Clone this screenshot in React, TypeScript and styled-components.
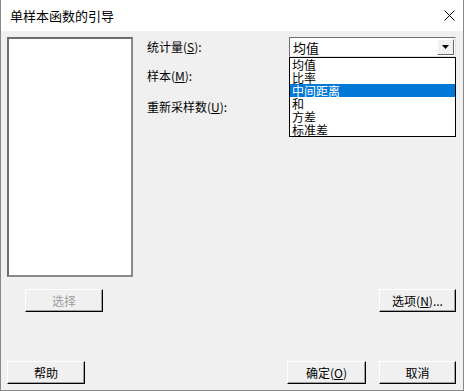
import React from "react";
import styled, { createGlobalStyle } from "styled-components";

const Global = createGlobalStyle`
  html, body { margin: 0; padding: 0; background: #f0f0f0; }
  body { font-family: "Noto Sans CJK SC", "Liberation Sans", sans-serif; }
  * { box-sizing: border-box; }
`;

const Window = styled.div`
  width: 464px;
  height: 391px;
  background: #f0f0f0;
  border-left: 1px solid #888;
  border-right: 1px solid #888;
  border-bottom: 1px solid #888;
  display: flex;
  flex-direction: column;
  font-family: "Noto Sans CJK SC", sans-serif;
  font-size: 12px;
  color: #000;
`;

const TitleBar = styled.div`
  height: 31px;
  background: #fff;
  display: flex;
  align-items: center;
  justify-content: space-between;
  padding: 0 8px 0 9px;
  font-size: 13px;
`;

const Close = styled.div`
  width: 12px;
  height: 12px;
  display: flex;
  align-items: center;
  justify-content: center;
`;

const Body = styled.div`
  flex: 1;
  display: flex;
  flex-direction: column;
  padding: 6px 7px 6px 6px;
`;

const Top = styled.div`
  display: flex;
  height: 240px;
`;

const ListBox = styled.div`
  width: 126px;
  height: 240px;
  background: #fff;
  border-top: 2px solid #6d6d6d;
  border-left: 2px solid #6d6d6d;
  border-right: 2px solid #8a8a8a;
  border-bottom: 2px solid #8a8a8a;
`;

const Form = styled.div`
  flex: 1;
  display: grid;
  grid-template-columns: 142px 167px;
  grid-template-rows: 20px 38px 24px;
  padding-left: 14px;
  align-items: center;
`;

const Label = styled.div<{ $row: number }>`
  font-size: 12px;
  line-height: 14px;
  grid-column: 1;
  grid-row: ${(p) => p.$row};
`;

const U = styled.span`
  text-decoration: underline;
`;

const ComboWrap = styled.div`
  position: relative;
  grid-column: 2;
  grid-row: 1;
  height: 20px;
`;

const Combo = styled.div`
  height: 20px;
  background: #fff;
  border-top: 1px solid #6d6d6d;
  border-left: 1px solid #6d6d6d;
  border-right: 1px solid #e3e3e3;
  border-bottom: 1px solid #e3e3e3;
  display: flex;
  align-items: center;
  padding-left: 3px;
  justify-content: space-between;
  font-size: 13px;
`;

const Arrow = styled.div`
  width: 17px;
  height: 16px;
  margin-right: 1px;
  background: #f0f0f0;
  border-top: 1px solid #fff;
  border-left: 1px solid #fff;
  border-right: 1px solid #696969;
  border-bottom: 1px solid #696969;
  display: flex;
  align-items: center;
  justify-content: center;
`;

const DropList = styled.div`
  position: absolute;
  top: 20px;
  left: 0;
  width: 167px;
  background: #fff;
  border: 1px solid #000;
  z-index: 2;
`;

const Item = styled.div<{ $sel?: boolean }>`
  height: 13px;
  line-height: 13px;
  font-size: 12px;
  padding-left: 2px;
  background: ${(p) => (p.$sel ? "#0078d7" : "#fff")};
  color: ${(p) => (p.$sel ? "#fff" : "#000")};
  white-space: nowrap;
`;

const Row = styled.div<{ $mt: number; $left: number }>`
  display: flex;
  align-items: center;
  justify-content: space-between;
  margin-top: ${(p) => p.$mt}px;
  padding-left: ${(p) => p.$left}px;
`;

const Group = styled.div`
  display: flex;
  gap: 13px;
`;

const Button = styled.div<{ $w: number; $disabled?: boolean }>`
  width: ${(p) => p.$w}px;
  height: 23px;
  background: #f0f0f0;
  border-top: 1px solid #fff;
  border-left: 1px solid #fff;
  border-right: 1px solid #000;
  border-bottom: 1px solid #000;
  box-shadow: inset -1px -1px 0 #a0a0a0;
  display: flex;
  align-items: center;
  justify-content: center;
  font-size: 12px;
  color: ${(p) => (p.$disabled ? "#a0a0a0" : "#000")};
`;

export default function App() {
  return (
    <>
      <Global />
      <Window>
        <TitleBar>
          <span>单样本函数的引导</span>
          <Close>
            <svg width="11" height="11" viewBox="0 0 11 11">
              <path d="M0.5 0.5 L10.5 10.5 M10.5 0.5 L0.5 10.5" stroke="#000" strokeWidth="1" />
            </svg>
          </Close>
        </TitleBar>
        <Body>
          <Top>
            <ListBox />
            <Form>
              <Label $row={1}>
                统计量(<U>S</U>):
              </Label>
              <ComboWrap>
                <Combo>
                  <span>均值</span>
                  <Arrow>
                    <svg width="7" height="4" viewBox="0 0 7 4">
                      <path d="M0 0 H7 L3.5 4 Z" fill="#000" />
                    </svg>
                  </Arrow>
                </Combo>
                <DropList>
                  <Item>均值</Item>
                  <Item>比率</Item>
                  <Item $sel>中间距离</Item>
                  <Item>和</Item>
                  <Item>方差</Item>
                  <Item>标准差</Item>
                </DropList>
              </ComboWrap>
              <Label $row={2}>
                样本(<U>M</U>):
              </Label>
              <Label $row={3}>
                重新采样数(<U>U</U>):
              </Label>
            </Form>
          </Top>
          <Row $mt={12} $left={18}>
            <Button $w={78} $disabled>选择</Button>
            <Button $w={77}>
              选项(<U>N</U>)...
            </Button>
          </Row>
          <Row $mt={49} $left={0}>
            <Button $w={78}>帮助</Button>
            <Group>
              <Button $w={79}>
                确定(<U>O</U>)
              </Button>
              <Button $w={77}>取消</Button>
            </Group>
          </Row>
        </Body>
      </Window>
    </>
  );
}
